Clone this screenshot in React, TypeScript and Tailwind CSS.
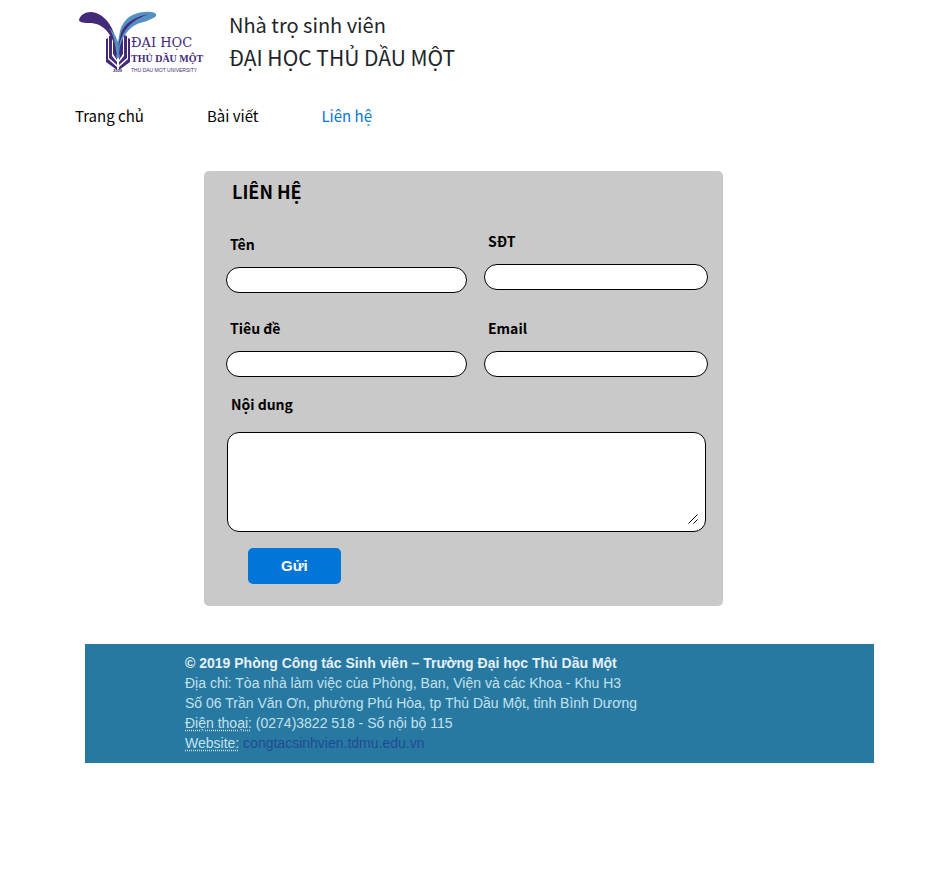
import type { ReactNode } from "react";

function Logo() {
  return (
    <svg viewBox="0 0 126 64" className="mt-0.5 h-16 w-[126px] shrink-0" role="img" aria-label="Đại học Thủ Dầu Một">
      <g fill="#432a79">
        <path d="M28 28L30 27L30 48L39 56L39 59L28 51Z" />
        <path d="M31 25L34 24L34 45L39 51L39 54L31 47Z" />
        <path d="M35 24L39 34L39 49L35 43Z" />
        <path d="M52 28L50 27L50 48L41 56L41 59L52 51Z" />
        <path d="M49 25L46 24L46 45L41 51L41 54L49 47Z" />
        <path d="M45 26L41 36L41 49L45 43Z" />
        <path d="M1 9C2 4 7 1 13 1C25 2 34 13 37 26C39 33 40 38 40 43C37 35 34 25 28 19C22 13 17 12 10 12C5 12 1 11 1 9Z" />
      </g>
      <path
        fill="#5490c4"
        d="M78 3C76 0 65 0 57 3C49 6 44 12 42 20L40 31C38 26 36 21 31 17C36 24 37 34 39 44L40 48L41 44C41 34 45 24 53 17C60 11 65 12 71 9C75 7 79 6 78 3Z"
      />
      <path fill="#432a79" d="M71 3C60 5 50 10 45 18C42 23 41 30 40 38C42 30 44 23 49 17C55 10 62 6 71 3Z" />
      <circle cx="40" cy="45" r="2" fill="#5490c4" />
      <g fill="#432a79">
        <text x="53" y="36" fontFamily="DejaVu Serif, serif" fontSize="13">ĐẠI HỌC</text>
        <text x="53" y="51" fontFamily="Liberation Serif, serif" fontSize="10" fontWeight="700">THỦ DẦU MỘT</text>
        <text x="53" y="61" fontFamily="Liberation Sans, sans-serif" fontSize="5">THU DAU MOT UNIVERSITY</text>
        <text x="35" y="61" fontFamily="Liberation Sans, sans-serif" fontSize="4" fontWeight="700">2009</text>
      </g>
    </svg>
  );
}

function Field({ id, label, type = "text" }: { id: string; label: string; type?: string }) {
  return (
    <div className="flex flex-col gap-[13px]">
      <label htmlFor={id} className="pl-1 text-sm leading-5 font-bold">{label}</label>
      <input id={id} type={type} className="h-[26px] w-full rounded-full border border-black bg-white px-3 text-sm" />
    </div>
  );
}

function NavLink({ active = false, children }: { active?: boolean; children: ReactNode }) {
  return (
    <a href="#" className={active ? "text-[#0275d8]" : "text-black"}>{children}</a>
  );
}

export default function App() {
  return (
    <div className="bg-white pb-28 font-['Noto_Sans_CJK_JP','Noto_Sans',sans-serif] text-black">
      <header className="flex items-start gap-[25px] pt-[9px] pl-[78px]">
        <Logo />
        <div className="text-[#212529]">
          <p className="text-[20px] leading-8">Nhà trọ sinh viên</p>
          <p className="text-[21px] leading-8">ĐẠI HỌC THỦ DẦU MỘT</p>
        </div>
      </header>

      <nav className="mt-[29px] flex gap-[63px] pl-[75px] text-[15px] leading-6">
        <NavLink>Trang chủ</NavLink>
        <NavLink>Bài viết</NavLink>
        <NavLink active>Liên hệ</NavLink>
      </nav>

      <main className="mt-[43px] pr-4 pl-[18px]">
        <form className="mx-auto max-w-[519px] rounded-[5px] bg-[#c9c9c9] pt-1.5 pr-[15px] pb-[22px] pl-[22px]" onSubmit={(e) => e.preventDefault()}>
          <h1 className="pl-1.5 text-lg leading-7 font-bold">LIÊN HỆ</h1>
          <div className="mt-[26px] flex gap-[17px]">
            <div className="flex w-1/2 flex-col gap-[25px] pt-[3px]">
              <Field id="name" label="Tên" />
              <Field id="subject" label="Tiêu đề" />
            </div>
            <div className="flex flex-1 flex-col gap-7">
              <Field id="phone" label="SĐT" type="tel" />
              <Field id="email" label="Email" type="email" />
            </div>
          </div>
          <label htmlFor="message" className="mt-[17px] block pl-[5px] text-sm leading-5 font-bold">Nội dung</label>
          <div className="relative mt-[18px] mr-0.5 ml-px">
            <textarea id="message" className="block h-[100px] w-full resize-none rounded-xl border border-black bg-white p-2 text-sm" />
            <svg viewBox="0 0 10 10" className="pointer-events-none absolute right-2 bottom-2 size-2.5" aria-hidden="true">
              <path d="M0.5 9.5L9.5 0.5M5.5 9.5L9.5 5.5" fill="none" stroke="#000000" />
            </svg>
          </div>
          <button type="submit" className="mt-4 ml-[22px] block h-9 rounded-[5px] bg-[#0275d8] px-[33px] font-['Liberation_Sans',Arial,sans-serif] text-[15px] font-bold text-white">
            Gửi
          </button>
        </form>
      </main>

      <footer className="mt-[38px] mr-[51px] ml-[85px] bg-[#2879a2] pt-[9px] pb-2.5 pl-[100px] font-['Liberation_Sans',Arial,sans-serif] text-sm leading-5 text-[#c3e1ed]">
        <p className="font-bold text-[#e4f1f7]">© 2019 Phòng Công tác Sinh viên – Trường Đại học Thủ Dầu Một</p>
        <p>Địa chỉ: Tòa nhà làm việc của Phòng, Ban, Viện và các Khoa - Khu H3</p>
        <p>Số 06 Trần Văn Ơn, phường Phú Hòa, tp Thủ Dầu Một, tỉnh Bình Dương</p>
        <p><span className="underline decoration-dotted underline-offset-2">Điện thoại:</span> (0274)3822 518 - Số nội bộ 115</p>
        <p>
          <span className="underline decoration-dotted underline-offset-2">Website:</span>{" "}
          <a href="#" className="text-[#204b94]">congtacsinhvien.tdmu.edu.vn</a>
        </p>
      </footer>
    </div>
  );
}
